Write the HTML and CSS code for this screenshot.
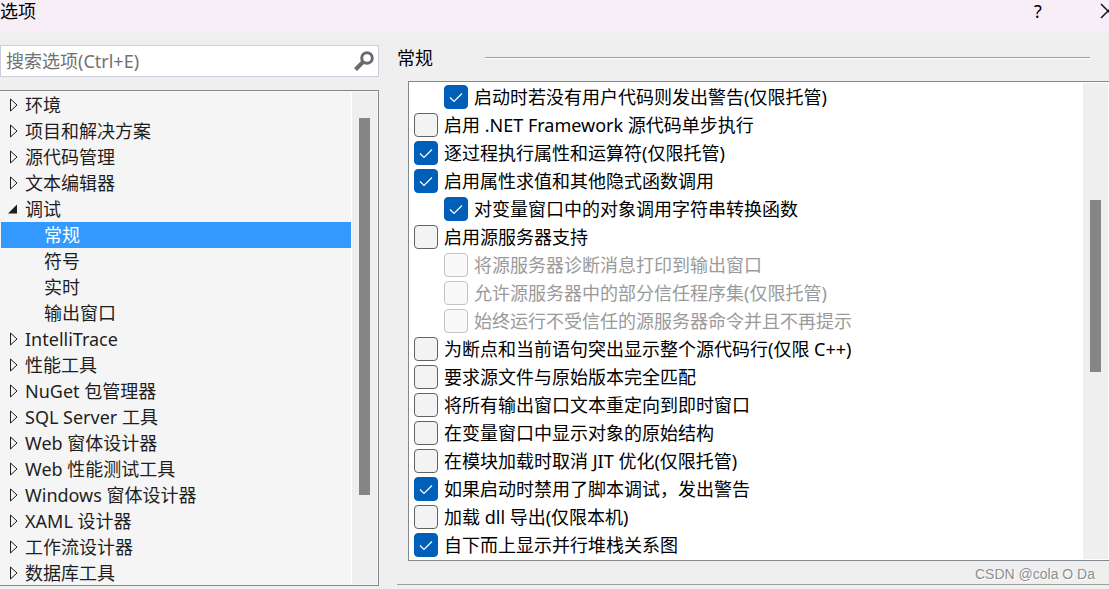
FILE: index.html
```
<!DOCTYPE html>
<html lang="zh-CN">
<head>
<meta charset="utf-8">
<title>选项</title>
<link rel="stylesheet" href="styles.css">
</head>
<body>
<svg class="symbols" aria-hidden="true">
  <symbol id="closed" viewBox="0 0 12 14"><path d="M3.5 1v12l6.5-6z" fill="none" stroke="#1e1e1e" stroke-width="1"/></symbol>
  <symbol id="open" viewBox="0 0 12 14"><path d="M10 2.5v9H1z" fill="#1e1e1e"/></symbol>
</svg>
<div class="dialog">
  <header class="titlebar">
    <h1 class="title">选项</h1>
    <button class="caption-button" aria-label="帮助">?</button>
    <button class="caption-button close" aria-label="关闭"><svg width="16" height="16" viewBox="0 0 16 16"><path d="M1 1l14 14M15 1L1 15" stroke="#111" stroke-width="1.5" fill="none"/></svg></button>
  </header>
  <main class="content">
    <aside class="sidebar">
      <div class="search">
        <input class="search-input" type="text" placeholder="搜索选项(Ctrl+E)" aria-label="搜索选项">
        <button class="search-button" aria-label="搜索"><svg width="20" height="20" viewBox="0 0 20 20"><circle cx="13" cy="7" r="5.3" fill="none" stroke="#6b6b6b" stroke-width="3"/><path d="M9.5 10.5L1.5 18.5" stroke="#6b6b6b" stroke-width="4"/></svg></button>
      </div>
      <div class="tree-box">
        <ul class="tree">
          <li class="node"><button class="expander" aria-label="展开"><svg><use href="#closed"/></svg></button>环境</li>
          <li class="node"><button class="expander" aria-label="展开"><svg><use href="#closed"/></svg></button>项目和解决方案</li>
          <li class="node"><button class="expander" aria-label="展开"><svg><use href="#closed"/></svg></button>源代码管理</li>
          <li class="node"><button class="expander" aria-label="展开"><svg><use href="#closed"/></svg></button>文本编辑器</li>
          <li class="node"><button class="expander" aria-label="折叠"><svg><use href="#open"/></svg></button>调试</li>
          <li class="node child selected">常规</li>
          <li class="node child">符号</li>
          <li class="node child">实时</li>
          <li class="node child">输出窗口</li>
          <li class="node"><button class="expander" aria-label="展开"><svg><use href="#closed"/></svg></button>IntelliTrace</li>
          <li class="node"><button class="expander" aria-label="展开"><svg><use href="#closed"/></svg></button>性能工具</li>
          <li class="node"><button class="expander" aria-label="展开"><svg><use href="#closed"/></svg></button>NuGet 包管理器</li>
          <li class="node"><button class="expander" aria-label="展开"><svg><use href="#closed"/></svg></button>SQL Server 工具</li>
          <li class="node"><button class="expander" aria-label="展开"><svg><use href="#closed"/></svg></button>Web 窗体设计器</li>
          <li class="node"><button class="expander" aria-label="展开"><svg><use href="#closed"/></svg></button>Web 性能测试工具</li>
          <li class="node"><button class="expander" aria-label="展开"><svg><use href="#closed"/></svg></button>Windows 窗体设计器</li>
          <li class="node"><button class="expander" aria-label="展开"><svg><use href="#closed"/></svg></button>XAML 设计器</li>
          <li class="node"><button class="expander" aria-label="展开"><svg><use href="#closed"/></svg></button>工作流设计器</li>
          <li class="node"><button class="expander" aria-label="展开"><svg><use href="#closed"/></svg></button>数据库工具</li>
        </ul>
        <div class="track tree-track"><div class="thumb"></div></div>
      </div>
    </aside>
    <section class="page">
      <div class="page-head"><h2 class="page-title">常规</h2><div class="rule"></div></div>
      <div class="option-box">
        <div class="options">
          <label class="option nested"><input class="check" type="checkbox" checked>启动时若没有用户代码则发出警告(仅限托管)</label>
          <label class="option"><input class="check" type="checkbox">启用 .NET Framework 源代码单步执行</label>
          <label class="option"><input class="check" type="checkbox" checked>逐过程执行属性和运算符(仅限托管)</label>
          <label class="option"><input class="check" type="checkbox" checked>启用属性求值和其他隐式函数调用</label>
          <label class="option nested"><input class="check" type="checkbox" checked>对变量窗口中的对象调用字符串转换函数</label>
          <label class="option"><input class="check" type="checkbox">启用源服务器支持</label>
          <label class="option nested disabled"><input class="check" type="checkbox" disabled>将源服务器诊断消息打印到输出窗口</label>
          <label class="option nested disabled"><input class="check" type="checkbox" disabled>允许源服务器中的部分信任程序集(仅限托管)</label>
          <label class="option nested disabled"><input class="check" type="checkbox" disabled>始终运行不受信任的源服务器命令并且不再提示</label>
          <label class="option"><input class="check" type="checkbox">为断点和当前语句突出显示整个源代码行(仅限 C++)</label>
          <label class="option"><input class="check" type="checkbox">要求源文件与原始版本完全匹配</label>
          <label class="option"><input class="check" type="checkbox">将所有输出窗口文本重定向到即时窗口</label>
          <label class="option"><input class="check" type="checkbox">在变量窗口中显示对象的原始结构</label>
          <label class="option"><input class="check" type="checkbox">在模块加载时取消 JIT 优化(仅限托管)</label>
          <label class="option"><input class="check" type="checkbox" checked>如果启动时禁用了脚本调试，发出警告</label>
          <label class="option"><input class="check" type="checkbox">加载 dll 导出(仅限本机)</label>
          <label class="option"><input class="check" type="checkbox" checked>自下而上显示并行堆栈关系图</label>
        </div>
        <div class="track option-track"><div class="thumb"></div></div>
      </div>
      <footer class="page-foot">CSDN @cola O Da</footer>
    </section>
  </main>
</div>
</body>
</html>
```
FILE: styles.css
```
* { box-sizing: border-box; }
body {
  margin: 0;
  overflow: hidden;
  background: #efefef;
  color: #000;
  font: 18px/26px "Noto Sans", "Noto Sans CJK SC", sans-serif;
}
button { padding: 0; border: 0; background: none; font: inherit; color: inherit; }
svg { display: block; }
.symbols { display: none; }
.dialog { height: 100vh; display: flex; flex-direction: column; }

.titlebar {
  display: flex;
  flex: none;
  align-items: flex-start;
  height: 33px;
  background: #f8eef7;
}
.title { flex: 1; margin: 0; font-size: 18px; line-height: 22px; font-weight: 400; }
.caption-button { width: 20px; line-height: 22px; }
.close { flex: none; width: 16px; margin: 3px -7px 0 52px; }

.content {
  flex: 1;
  min-height: 0;
  display: grid;
  grid-template-columns: 379px minmax(0, 1fr);
  grid-template-rows: minmax(0, 1fr);
  gap: 18px;
}
.sidebar { display: flex; flex-direction: column; min-height: 0; padding: 12px 0 3px; }
.search {
  display: flex;
  flex: none;
  align-items: center;
  height: 32px;
  padding-right: 4px;
  border: 1px solid #ccccdd;
  background: #fff;
}
.search-input {
  flex: 1;
  min-width: 0;
  padding: 0 5px;
  border: 0;
  outline: 0;
  background: none;
  font: inherit;
}
.search-input::placeholder { color: #717171; opacity: 1; }

.tree-box {
  display: flex;
  flex: 1;
  min-height: 0;
  overflow: hidden;
  margin-top: 13px;
  padding: 1px;
  border: solid #828790;
  border-width: 1px 1px 1px 0;
  background: #f5f5f5;
}
.tree { flex: 1; margin: 0; padding: 0; list-style: none; color: #1e1e1e; }
.node { display: flex; align-items: center; height: 26px; padding-left: 6px; white-space: nowrap; }
.expander { width: 18px; }
.expander svg { width: 12px; height: 14px; }
.child { padding-left: 43px; }
.selected { background: #3399ff; color: #fff; }
.track { flex: none; background: #efefef; }
.thumb { width: 11px; margin-left: 7px; background: #858585; }
.tree-track { width: 26px; border-left: 1px solid #fff; padding-top: 26px; }
.tree-track .thumb { height: 377px; }

.page-head { display: flex; align-items: center; height: 48px; padding: 2px 19px 0 0; }
.page-title { width: 88px; margin: 0; font-size: 18px; font-weight: 400; }
.rule { flex: 1; height: 2px; border-top: 1px solid #a0a0a0; background: #fff; }
.option-box {
  display: flex;
  margin-left: 11px;
  padding: 1px 1px 1px 5px;
  border: solid #828790;
  border-width: 1px 0 1px 1px;
  background: #fff;
}
.options { flex: 1; min-width: 0; }
.option { display: flex; align-items: center; gap: 6px; height: 28px; white-space: nowrap; }
.nested { padding-left: 30px; }
.disabled { color: #9a9a9a; }
.check {
  flex: none;
  appearance: none;
  width: 24px;
  height: 24px;
  margin: 0;
  border: 1px solid #626262;
  border-radius: 4px;
  background: #f3f3f3;
}
.check:disabled { border-color: #c4c4c4; background: #f9f9f9; }
.check:checked {
  border-color: #005fb8;
  background: #005fb8 url("data:image/svg+xml,%3Csvg xmlns='http://www.w3.org/2000/svg' viewBox='0 0 24 24'%3E%3Cpath d='M6 12.5l4 4 8-8' fill='none' stroke='%23fff' stroke-width='1.2'/%3E%3C/svg%3E") center / 24px 24px;
}
.option-track { width: 25px; padding-top: 117px; }
.option-track .thumb { height: 172px; }
.page-foot {
  height: 24px;
  padding-right: 14px;
  border-bottom: 1px solid #a0a0a0;
  color: #8f8f8f;
  font: 14px/26px "Liberation Sans", Arial, sans-serif;
  text-align: right;
  text-shadow: 1px 1px 0 #fff;
}
```
